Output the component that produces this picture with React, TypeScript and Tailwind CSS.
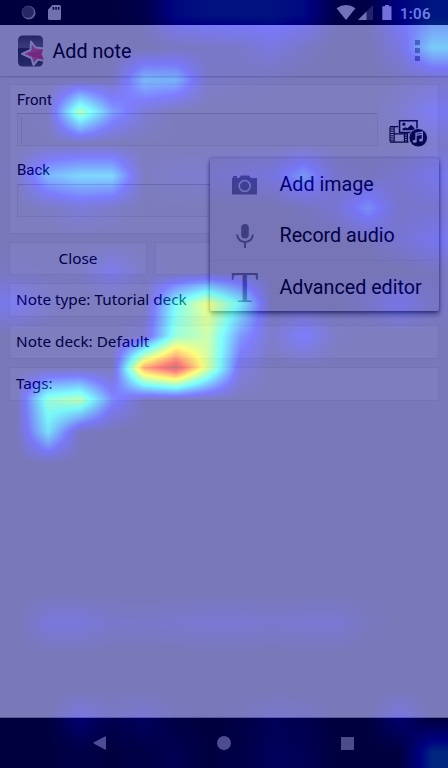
import React from "react";

const CELL = 32;
const COLS = 14;
const ROWS = 24;

// Attention scores per grid row; rows that are absent are all zero.
const SCORES: Record<number, number[]> = {
  0: [0, 0, 0, 0, 0.02, 0.14, 0.16, 0.16, 0.16, 0.14, 0.02, 0.01, 0.13, 0.17],
  1: [0, 0, 0, 0, 0, 0.02, 0.03, 0.04, 0.08, 0.03, 0, 0, 0.08, 0.29],
  2: [0, 0, 0, 0.01, 0.25, 0.24, 0.03, 0.02, 0.01, 0, 0, 0, 0.01, 0.03],
  3: [0, 0.01, 0.49, 0.2, 0.05, 0, 0, 0, 0, 0, 0, 0, 0.04, 0.11],
  4: [0, 0, 0, 0, 0, 0, 0, 0, 0, 0, 0, 0, 0, 0.03],
  5: [0.01, 0.24, 0.3, 0.3, 0.01, 0.03, 0.04, 0.06, 0.08, 0.2, 0.04, 0.02, 0.05, 0.1],
  6: [0, 0.02, 0.06, 0.03, 0, 0, 0, 0, 0, 0.02, 0.06, 0.18, 0.04, 0.05],
  7: [0, 0, 0, 0, 0, 0, 0, 0, 0, 0, 0, 0.01, 0.06, 0.11],
  8: [0.02, 0.01, 0.02, 0.09, 0.02, 0, 0, 0, 0, 0, 0, 0, 0, 0.02],
  9: [0.1, 0.03, 0, 0, 0, 0.38, 0.6, 0.36, 0, 0, 0, 0.04, 0.1, 0.03],
  10: [0, 0, 0, 0, 0.04, 0.44, 0.53, 0.19, 0.03, 0.13, 0.02, 0, 0, 0],
  11: [0, 0, 0, 0, 0.78, 0.98, 0.55, 0.08, 0, 0, 0, 0, 0, 0],
  12: [0, 0.44, 0.5, 0.16, 0.01, 0, 0, 0, 0, 0, 0, 0, 0, 0],
  13: [0, 0.33, 0.02, 0, 0, 0, 0, 0, 0, 0, 0, 0, 0, 0],
  19: [0, 0.07, 0.07, 0.04, 0.035, 0.045, 0.055, 0.055, 0.045, 0.05, 0.055, 0.015, 0, 0],
  22: [0, 0, 0.09, 0.03, 0.06, 0.01, 0, 0.01, 0.045, 0.03, 0, 0, 0.09, 0],
  23: [0, 0, 0.01, 0, 0.01, 0.035, 0, 0.01, 0.05, 0.04, 0, 0, 0, 0.2],
};

function HeatMap() {
  const rows = Array.from({ length: ROWS }, (_, i) => SCORES[i] ?? Array(COLS).fill(0));
  return (
    <svg className="pointer-events-none absolute inset-0 z-20 opacity-50" width="448" height="768">
      <defs>
        <filter id="jet" filterUnits="userSpaceOnUse" x="0" y="0" width="448" height="768" colorInterpolationFilters="sRGB">
          <feComponentTransfer>
            <feFuncR type="table" tableValues="0 0 0 0 .5 1 1 1 .5" />
            <feFuncG type="table" tableValues="0 0 .5 1 1 1 .5 0 0" />
            <feFuncB type="table" tableValues=".5 1 1 1 .5 0 0 0 0" />
          </feComponentTransfer>
        </filter>
        <linearGradient id="ramp" x1="0" y1="0" x2="0" y2="1">
          <stop offset="0" stopColor="#fff" stopOpacity="0" />
          <stop offset="1" stopColor="#fff" stopOpacity="1" />
        </linearGradient>
        <mask id="fade" maskContentUnits="objectBoundingBox" x="0" y="0" width="1" height="1">
          <rect width="1" height="1" fill="url(#ramp)" />
        </mask>
        {rows.map((r, i) => (
          <linearGradient key={i} id={`row${i}`} gradientUnits="userSpaceOnUse" x1="16" x2="432" y1="0" y2="0">
            {r.map((v, c) => {
              const g = v * 255;
              return <stop key={c} offset={c / (COLS - 1)} stopColor={`rgb(${g},${g},${g})`} />;
            })}
          </linearGradient>
        ))}
      </defs>
      <g filter="url(#jet)">
        <rect width="448" height="16" fill="url(#row0)" />
        {rows.map((_, i) => (
          <g key={i}>
            <rect y={16 + i * CELL} width="448" height={CELL} fill={`url(#row${i})`} />
            {i < ROWS - 1 && (
              <rect y={16 + i * CELL} width="448" height={CELL} fill={`url(#row${i + 1})`} mask="url(#fade)" />
            )}
          </g>
        ))}
      </g>
    </svg>
  );
}

function StatusBar() {
  return (
    <div className="flex h-[25px] items-center bg-black pl-[21px] pr-[16px] text-[#e4e4e4]">
      <svg width="15" height="15" viewBox="0 0 15 15">
        <circle cx="7.8" cy="7.8" r="6.8" fill="#bbb" />
        <circle cx="7" cy="7" r="6" fill="#505050" stroke="#999" strokeDasharray="1 1" />
      </svg>
      <svg className="ml-3" width="13" height="15" viewBox="0 0 13 15" fill="currentColor">
        <path fillRule="evenodd" d="M4.500 0H11.500Q13 0 13 1.500V13.500Q13 15 11.500 15H1.500Q0 15 0 13.500V4.500ZM4.700 2V4.800H6.200V2ZM7.300 2V4.800H8.800V2ZM9.900 2V4.800H11.400V2Z" />
      </svg>
      <div className="grow" />
      <svg className="-ml-px" width="20" height="15" viewBox="0 0 20 15" fill="currentColor">
        <path d="M.5 3.300Q10-3.300 19.500 3.300L10 14.900Z" />
      </svg>
      <svg className="ml-[2px]" width="15" height="15" viewBox="0 0 15 15" fill="currentColor">
        <path d="M0 15 15 0V15Z" opacity=".3" />
        <path d="M0 15 8.500 6.500V15Z" />
      </svg>
      <svg className="ml-[9px]" width="10" height="15" viewBox="0 0 10 15" fill="currentColor">
        <path d="M3 0H7V1.300H9.500V15H.3V1.300H3Z" />
      </svg>
      <span className="ml-[8px] mt-[3px] w-[32px] whitespace-nowrap text-[15px] font-medium leading-none tracking-[0.3px]">1:06</span>
    </div>
  );
}

function AppBar() {
  return (
    <header className="relative z-[1] flex h-[51px] items-center bg-[#f5f2f2] pl-[17px] pr-[28px] shadow-[0_1px_2px_rgba(0,0,0,0.22)]">
      <svg width="27" height="32" viewBox="0 0 27 32">
        <defs>
          <linearGradient id="tile" x1="0" y1="0" x2="0" y2="1">
            <stop offset="0" stopColor="#4a4a4e" />
            <stop offset=".38" stopColor="#77777c" />
            <stop offset=".42" stopColor="#37373c" />
            <stop offset="1" stopColor="#505058" />
          </linearGradient>
          <clipPath id="tileClip"><rect x="1" y=".5" width="26" height="31" rx="4.500" /></clipPath>
        </defs>
        <rect x="1" y=".5" width="25" height="31" rx="4.500" fill="url(#tile)" />
        <g clipPath="url(#tileClip)">
          <path d="M14 6.500 18.500 12.500 28 13.500 25.500 19 28 26 21 24.500 16.500 30 14.300 23 5 18.800 13.500 15Z" fill="#ee6c92" stroke="#f5f2f2" strokeWidth="2" strokeLinejoin="round" />
          <path d="M10 19 25 15 24.500 19 27 25 21 23.500Z" fill="#e04070" opacity=".6" />
        </g>
      </svg>
      <h1 className="ml-[8.5px] grow pt-[2px] text-[19.7px] leading-none text-black">Add note</h1>
      <div className="flex flex-col gap-[3px] text-[#888]">
        <i className="size-[5px] bg-current" />
        <i className="size-[5px] bg-current" />
        <i className="size-[5px] bg-current" />
      </div>
    </header>
  );
}

function MediaIcon() {
  return (
    <svg width="39" height="28" viewBox="0 0 38 27.300" fill="none" stroke="#101010">
      <path d="M1 7.500H9M1 22.500H19M5 8V22M1 8V22M5 14.500H16M15 15V22M18 14V22" strokeWidth="1.200" />
      <path d="M3 7V23M16.500 14V23" strokeWidth="2.600" strokeDasharray="1 1.200" />
      <rect x="10.300" y="1.700" width="17" height="11.500" strokeWidth="1.500" fill="#fff" />
      <circle cx="14.500" cy="5" r="1.500" fill="#101010" stroke="none" />
      <path d="M13 11V9.500L16 8 18 9 21.500 5.500 25 9V11Z" fill="#101010" stroke="none" />
      <circle cx="28.500" cy="18.300" r="9" fill="#101010" stroke="#fff" strokeWidth=".8" />
      <path d="M26.300 21.500V14L32.500 12.800V20.300M26.300 16 32.500 14.800" stroke="#fff" strokeWidth="1.300" />
      <ellipse cx="25" cy="21.700" rx="1.900" ry="1.500" fill="#fff" stroke="none" />
      <ellipse cx="31.200" cy="20.500" rx="1.900" ry="1.500" fill="#fff" stroke="none" />
    </svg>
  );
}

function Row({ children }: { children?: React.ReactNode }) {
  return (
    <div className="flex h-[34px] items-center border border-[#ebe8eb] bg-[#fefdfd] pl-[6px] font-['Noto_Sans',sans-serif] text-[15.3px] leading-none text-black">
      <span>{children}</span>
    </div>
  );
}

function Menu() {
  const label = "pt-[3px] text-[19.7px] leading-none text-black";
  return (
    <div className="absolute left-[210px] top-[158px] z-10 flex h-[153px] w-[229px] flex-col rounded-[2px] bg-[#f0edee] shadow-[0_3px_5px_rgba(0,0,0,0.6),0_0_3px_rgba(0,0,0,0.3)]">
      <div className="flex h-[51px] items-center pl-[22px]">
        <svg className="mr-[22.5px] mt-[2px]" width="25" height="20" viewBox="0 0 25 20">
          <path fill="#808080" d="M0 3H1V1H5V3H7L9 .5H17L19 3H25V19.500H0Z" />
          <circle cx="12.700" cy="11" r="5.500" fill="none" stroke="#e8e8e8" strokeWidth="1.500" />
        </svg>
        <span className={label}>Add image</span>
      </div>
      <div className="flex h-[51px] items-center pl-[26px]">
        <svg className="mr-[25.5px] mt-[2px]" width="18" height="24" viewBox="0 0 18 24">
          <rect x="5.200" y="0" width="7.600" height="14.500" rx="3.800" fill="#808080" />
          <path d="M1.200 10.500C1.200 20.500 16.800 20.500 16.800 10.500M9 18V24" stroke="#808080" strokeWidth="2" fill="none" />
        </svg>
        <span className={label}>Record audio</span>
      </div>
      <div className="flex h-[51px] items-center border-t border-[#e4e1e4] pl-[21px]">
        <span className="mr-[21.500px] mt-[2px] w-[27px] font-['Liberation_Serif',serif] text-[45px] leading-[48px] text-[#808080]">T</span>
        <span className={label}>Advanced editor</span>
      </div>
    </div>
  );
}

const INPUT = "h-[33px] border border-[#ebe8eb] border-t-[#d4d2d5] bg-[#fbfafa]";

export default function App() {
  return (
    <div className="relative flex h-[768px] w-[448px] flex-col overflow-hidden bg-[#f5f2f2] font-['Roboto',sans-serif]">
      <StatusBar />
      <AppBar />
      <main className="flex grow flex-col gap-2 px-[9px] pt-2">
        <section className="flex h-[150px] flex-col border border-[#ebe8eb] bg-[#fefdfd] px-[7px] text-[15px] leading-none text-black">
          <label className="mt-[8px]">Front</label>
          <div className="mt-[5px] flex items-start">
            <div className={`${INPUT} w-[361px] pl-[3px] pt-[3px]`}>
              <div className="h-[27px] w-px bg-[#e4e1e4]" />
            </div>
            <div className="ml-[11px] mt-[6px] h-[27px] shrink-0"><MediaIcon /></div>
          </div>
          <label className="mt-[17px]">Back</label>
          <div className={`${INPUT} mt-[6px] w-[361px]`} />
        </section>
        <div className="grid h-[33px] grid-cols-[138px_1fr] gap-2">
          <button className="border border-[#ebe8eb] bg-[#fefdfd] font-['Noto_Sans',sans-serif] text-[15.3px] leading-none text-black">Close</button>
          <div className="border border-[#ebe8eb] bg-[#fefdfd]" />
        </div>
        <Row>Note type: Tutorial deck</Row>
        <Row>Note deck: Default</Row>
        <Row>Tags:</Row>
      </main>
      <Menu />
      <nav className="flex h-[51px] items-center border-t border-[#b0b0b0] bg-black pl-[93px] text-[#9a9a9a]">
        <svg width="14" height="14" viewBox="0 0 14 14" fill="currentColor"><path d="M13 0V14L.5 7.500V6.500Z" /></svg>
        <div className="ml-[110px] size-[14px] rounded-full bg-current" />
        <div className="ml-[110px] size-[13px] bg-current" />
      </nav>
      <HeatMap />
    </div>
  );
}
